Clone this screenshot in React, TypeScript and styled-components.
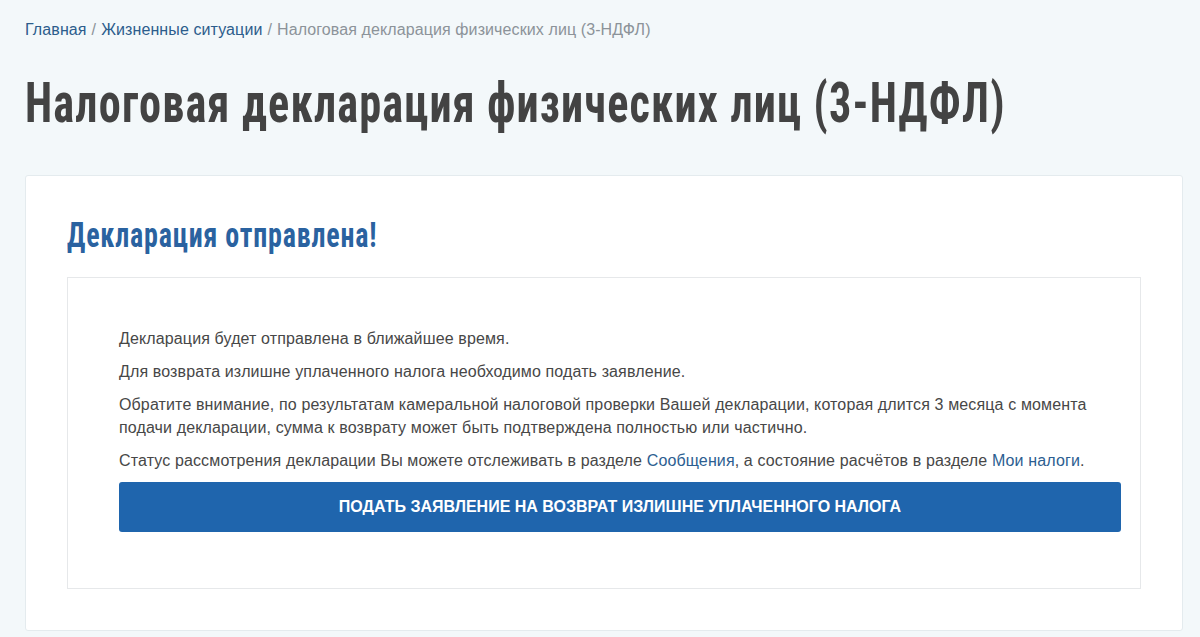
import React from "react";
import styled, { createGlobalStyle } from "styled-components";

const GlobalStyle = createGlobalStyle`
  html, body { margin: 0; padding: 0; }
  body {
    background: #f3f8fa;
    font-family: "Liberation Sans", Arial, sans-serif;
    color: #454545;
    overflow-x: hidden;
  }
`;

const Page = styled.div`
  padding: 20px 17px 0 25px;
`;

const Breadcrumbs = styled.nav`
  font-size: 16px;
  line-height: 20px;
  letter-spacing: 0.1px;
  color: #8c9399;
`;

const Crumb = styled.a`
  color: #2c5d8c;
  text-decoration: none;
`;

const Sep = styled.span`
  color: #8c9399;
  margin: 0 5px;
`;

const TitleRow = styled.div`
  margin-top: 28px;
  overflow: hidden;
  height: 70px;
`;

const Title = styled.h1`
  display: inline-block;
  margin: 0;
  font-family: "Roboto Condensed", "Open Sans", sans-serif;
  font-weight: 700;
  font-size: 56px;
  line-height: 70px;
  letter-spacing: 1.5px;
  color: #434343;
  white-space: nowrap;
  transform: scaleX(0.79);
  transform-origin: left center;
`;

const Card = styled.section`
  margin-top: 37px;
  background: #fff;
  border: 1px solid #e4ebee;
  border-radius: 3px;
  padding: 38px 41px 41px 41px;
`;

const SubtitleRow = styled.div`
  height: 44px;
  overflow: hidden;
`;

const Subtitle = styled.h2`
  display: inline-block;
  margin: 0;
  font-family: "Roboto Condensed", "Open Sans", sans-serif;
  font-weight: 700;
  font-size: 35px;
  line-height: 44px;
  letter-spacing: 1px;
  color: #2a62a0;
  white-space: nowrap;
  transform: scaleX(0.8);
  transform-origin: left center;
`;

const Panel = styled.div`
  margin-top: 19px;
  border: 1px solid #e6e8ea;
  padding: 49px 19px 56px 51px;
`;

const Para = styled.p`
  margin: 0 0 10px;
  font-size: 16px;
  line-height: 23px;
  letter-spacing: 0.13px;
  color: #474747;
`;

const Link = styled.a`
  color: #2c5e91;
  text-decoration: none;
`;

const Button = styled.button`
  display: block;
  width: 100%;
  height: 50px;
  margin-top: 10px;
  border: none;
  border-radius: 3px;
  background: #1f65ad;
  color: #fff;
  font-family: "Liberation Sans", Arial, sans-serif;
  font-weight: 700;
  font-size: 16px;
  letter-spacing: 0;
  text-transform: uppercase;
  cursor: pointer;
`;

export default function App() {
  return (
    <>
      <GlobalStyle />
      <Page>
        <Breadcrumbs>
          <Crumb href="#">Главная</Crumb>
          <Sep>/</Sep>
          <Crumb href="#">Жизненные ситуации</Crumb>
          <Sep>/</Sep>
          Налоговая декларация физических лиц (3-НДФЛ)
        </Breadcrumbs>
        <TitleRow>
          <Title>Налоговая декларация физических лиц (3-НДФЛ)</Title>
        </TitleRow>
        <Card>
          <SubtitleRow>
            <Subtitle>Декларация отправлена!</Subtitle>
          </SubtitleRow>
          <Panel>
            <Para>Декларация будет отправлена в ближайшее время.</Para>
            <Para>Для возврата излишне уплаченного налога необходимо подать заявление.</Para>
            <Para>
              Обратите внимание, по результатам камеральной налоговой проверки Вашей декларации, которая длится 3 месяца с момента подачи декларации, сумма к возврату может быть подтверждена полностью или частично.
            </Para>
            <Para>
              Статус рассмотрения декларации Вы можете отслеживать в разделе <Link href="#">Сообщения</Link>, а состояние расчётов в разделе <Link href="#">Мои налоги</Link>.
            </Para>
            <Button>Подать заявление на возврат излишне уплаченного налога</Button>
          </Panel>
        </Card>
      </Page>
    </>
  );
}
